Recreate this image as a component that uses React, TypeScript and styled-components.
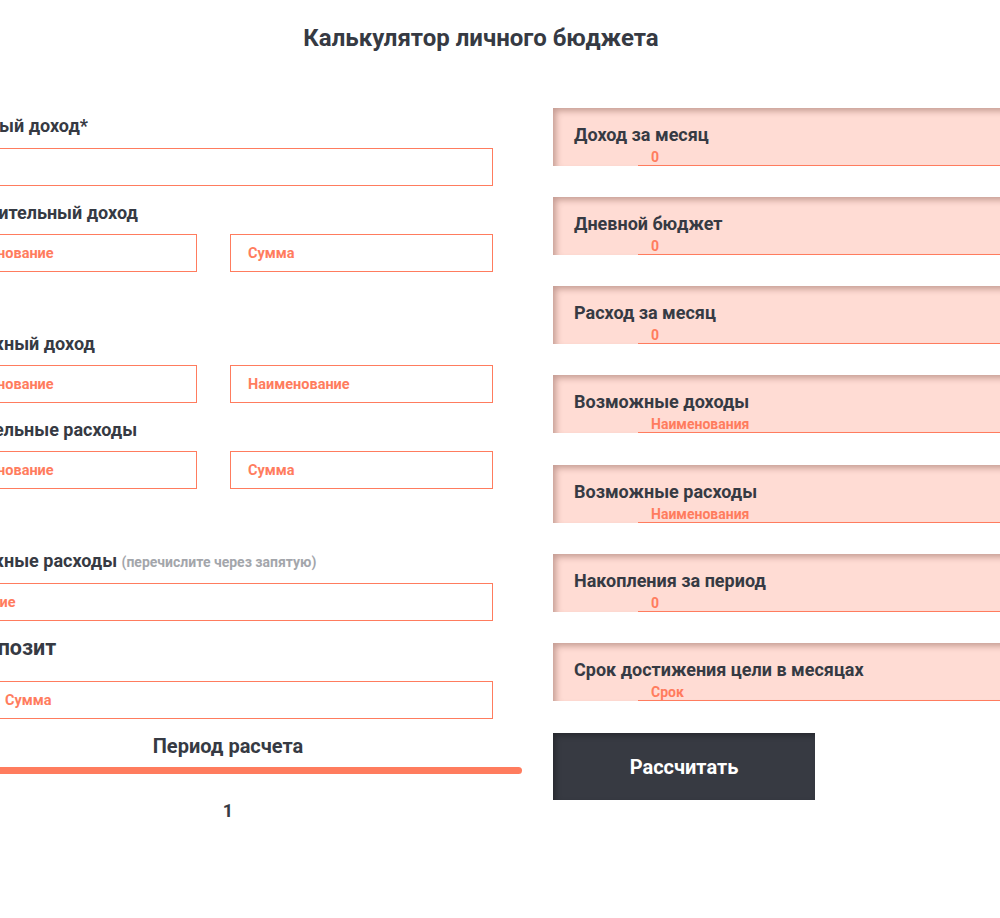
import React from "react";
import styled, { createGlobalStyle } from "styled-components";

const ORANGE = "#ff7c5e";
const DARK = "#363a43";

const GlobalStyle = createGlobalStyle`
  html, body { margin: 0; padding: 0; background: #ffffff; overflow: hidden; }
  body { font-family: Roboto, "Noto Sans", Arial, sans-serif; color: ${DARK}; }
  * { box-sizing: border-box; }
`;

const Page = styled.div`
  width: 1094px;
  margin-left: -66px;
  display: flex;
  flex-direction: column;
`;

const Title = styled.h1`
  margin: 0;
  padding-top: 24px;
  height: 108px;
  font-size: 24px;
  line-height: 28px;
  font-weight: 700;
  text-align: center;
  color: ${DARK};
`;

const Columns = styled.div`
  display: flex;
  gap: 31px;
  align-items: flex-start;
`;

const LeftColumn = styled.div`
  width: 588px;
  padding-top: 8px;
  display: flex;
  flex-direction: column;
`;

const Group = styled.div<{ $gapTop: number }>`
  display: flex;
  flex-direction: column;
  margin-top: ${(p) => p.$gapTop}px;
  width: 559px;
`;

const Label = styled.div<{ $big?: boolean }>`
  padding-left: ${(p) => (p.$big ? 36 : 0)}px;
  font-size: ${(p) => (p.$big ? 21.5 : 18)}px;
  line-height: ${(p) => (p.$big ? 24 : 20)}px;
  height: ${(p) => (p.$big ? 24 : 20)}px;
  font-weight: 700;
  color: ${DARK};
  white-space: nowrap;
`;

const Hint = styled.span`
  font-size: 14px;
  line-height: 20px;
  font-weight: 700;
  color: #a3a6ab;
`;

const InputRow = styled.div<{ $gapTop: number }>`
  display: grid;
  grid-template-columns: 1fr 1fr;
  gap: 33px;
  margin-top: ${(p) => p.$gapTop}px;
`;

const Field = styled.input<{ $pad?: number; $indent?: number; $gapTop?: number }>`
  display: block;
  width: 100%;
  height: 38px;
  margin: ${(p) => p.$gapTop ?? 0}px 0 0 0;
  border: 1px solid ${ORANGE};
  border-radius: 0;
  background: #ffffff;
  padding: 0 0 0 ${(p) => p.$pad ?? 17}px;
  text-indent: ${(p) => p.$indent ?? 0}px;
  font-family: Roboto, "Noto Sans", Arial, sans-serif;
  font-size: 14.5px;
  font-weight: 700;
  color: ${ORANGE};
  outline: none;
  &::placeholder {
    color: ${ORANGE};
    opacity: 1;
  }
`;

const Period = styled.div`
  margin-top: 16px;
  display: flex;
  flex-direction: column;
  align-items: stretch;
`;

const PeriodTitle = styled.div`
  font-size: 20px;
  line-height: 22px;
  font-weight: 700;
  text-align: center;
  color: ${DARK};
`;

const Track = styled.div`
  margin-top: 10px;
  height: 7px;
  border-radius: 4px;
  background: ${ORANGE};
`;

const PeriodValue = styled.div`
  margin-top: 27px;
  font-size: 18px;
  line-height: 20px;
  font-weight: 700;
  text-align: center;
  color: ${DARK};
`;

const RightColumn = styled.div`
  flex: 1;
  display: flex;
  flex-direction: column;
  gap: 31.17px;
`;

const Card = styled.div`
  height: 58px;
  background: #ffdcd4;
  box-shadow: inset 4px 4px 6px -1px rgba(90, 40, 30, 0.35);
  padding: 17px 0 0 21px;
  display: flex;
  flex-direction: column;
`;

const CardTitle = styled.div`
  font-size: 18px;
  line-height: 20px;
  height: 20px;
  font-weight: 700;
  color: ${DARK};
  white-space: nowrap;
`;

const CardValue = styled.input`
  display: block;
  margin-left: 64px;
  width: calc(100% - 64px);
  height: 21px;
  border: none;
  border-bottom: 1px solid ${ORANGE};
  background: transparent;
  padding: 4px 0 0 13px;
  font-family: Roboto, "Noto Sans", Arial, sans-serif;
  font-size: 14px;
  line-height: 16px;
  font-weight: 700;
  color: ${ORANGE};
  outline: none;
  &::placeholder {
    color: ${ORANGE};
    opacity: 1;
  }
`;

const CalcButton = styled.button`
  margin-top: 1px;
  width: 262px;
  height: 67px;
  border: none;
  border-radius: 0;
  background: #373a42;
  box-shadow: inset 3px 3px 6px -1px rgba(0, 0, 0, 0.35);
  color: #ffffff;
  font-family: Roboto, "Noto Sans", Arial, sans-serif;
  font-size: 20px;
  font-weight: 700;
  cursor: pointer;
`;

const results: { title: string; value: string }[] = [
  { title: "Доход за месяц", value: "0" },
  { title: "Дневной бюджет", value: "0" },
  { title: "Расход за месяц", value: "0" },
  { title: "Возможные доходы", value: "Наименования" },
  { title: "Возможные расходы", value: "Наименования" },
  { title: "Накопления за период", value: "0" },
  { title: "Срок достижения цели в месяцах", value: "Срок" },
];

export default function App() {
  return (
    <>
      <GlobalStyle />
      <Page>
        <Title>Калькулятор личного бюджета</Title>
        <Columns>
          <LeftColumn>
            <Group $gapTop={0}>
              <Label>Месячный доход*</Label>
              <Field $gapTop={12} />
            </Group>
            <Group $gapTop={17}>
              <Label>Дополнительный доход</Label>
              <InputRow $gapTop={11}>
                <Field placeholder="Наименование" />
                <Field placeholder="Сумма" />
              </InputRow>
            </Group>
            <Group $gapTop={62}>
              <Label>Возможный доход</Label>
              <InputRow $gapTop={11}>
                <Field placeholder="Наименование" />
                <Field placeholder="Наименование" />
              </InputRow>
            </Group>
            <Group $gapTop={17}>
              <Label>Обязательные расходы</Label>
              <InputRow $gapTop={11}>
                <Field placeholder="Наименование" />
                <Field placeholder="Сумма" />
              </InputRow>
            </Group>
            <Group $gapTop={62}>
              <Label>
                Возможные расходы <Hint>(перечислите через запятую)</Hint>
              </Label>
              <Field $gapTop={12} $indent={-38} placeholder="Наименование" />
            </Group>
            <Group $gapTop={15}>
              <Label $big>Депозит</Label>
              <Field $gapTop={21} $pad={70} placeholder="Сумма" />
            </Group>
            <Period>
              <PeriodTitle>Период расчета</PeriodTitle>
              <Track />
              <PeriodValue>1</PeriodValue>
            </Period>
          </LeftColumn>
          <RightColumn>
            {results.map((r) => (
              <Card key={r.title}>
                <CardTitle>{r.title}</CardTitle>
                <CardValue placeholder={r.value} readOnly />
              </Card>
            ))}
            <CalcButton>Рассчитать</CalcButton>
          </RightColumn>
        </Columns>
      </Page>
    </>
  );
}
